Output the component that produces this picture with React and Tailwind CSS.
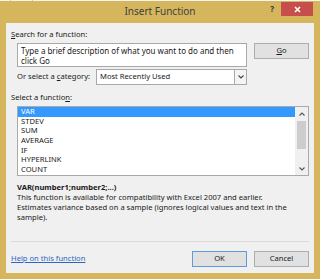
export default function App() {
  const items = ["VAR", "STDEV", "SUM", "AVERAGE", "IF", "HYPERLINK", "COUNT"];
  const font = { fontFamily: '"Noto Sans", "Open Sans", sans-serif' };

  return (
    <div
      className="w-[320px] h-[279px] bg-[#d6b65c] flex flex-col text-[7.6px] text-[#1a1a1a] overflow-hidden"
      style={font}
    >
      {/* excel behind the dialog */}
      <div className="h-[1px] bg-[#f4f4f4] flex">
        <div className="w-[11px] border-r border-[#c8c8c8]" />
        <div className="w-[22px] border-r border-[#c8c8c8]" />
      </div>

      {/* title bar */}
      <div className="h-[22px] grid grid-cols-[1fr_auto_1fr]">
        <div />
        <div className="flex items-center text-[10px] text-[#3f3f3f] pb-[1px]">Insert Function</div>
        <div className="flex justify-end items-start">
          <span className="mt-[3px] mr-[7px] text-[8px] font-bold text-[#333] leading-[10px]">?</span>
          <button className="mt-[1px] mr-[7px] w-[32px] h-[14px] bg-[#c74f4b] flex items-center justify-center">
            <svg width="7" height="7" viewBox="0 0 7 7">
              <path d="M1 1L6 6M6 1L1 6" stroke="white" strokeWidth="1.6" />
            </svg>
          </button>
        </div>
      </div>

      {/* body */}
      <div className="flex-1 mx-[6px] mb-[6px] bg-[#f0f0f0] flex flex-col">
        <div className="mt-[6px] ml-[5px] h-[10px] leading-[10px]">
          <span className="underline">S</span>earch for a function:
        </div>

        <div className="mt-[4px] ml-[11px] flex items-start">
          <div className="w-[230px] h-[24px] bg-white border border-[#a9a9a9] px-[3px] pt-[2px] leading-[9.5px] text-[8px]">
            Type a brief description of what you want to do and then click Go
          </div>
          <button className="ml-[7px] w-[55px] h-[16px] bg-[#e1e1e1] border border-[#adadad] flex items-center justify-center">
            <span className="underline">G</span>o
          </button>
        </div>

        <div className="mt-[2px] ml-[11px] flex items-center">
          <span className="w-[79px]">
            Or select a <span className="underline">c</span>ategory:
          </span>
          <div className="w-[151px] h-[16px] bg-white border border-[#a9a9a9] flex items-center">
            <span className="flex-1 pl-[3px]">Most Recently Used</span>
            <div className="w-[12px] h-full border-l border-[#a9a9a9] bg-[#f4f4f4] flex items-center justify-center">
              <svg width="6" height="4" viewBox="0 0 6 4">
                <path d="M0.5 0.5L3 3L5.5 0.5" stroke="#444" strokeWidth="1.1" fill="none" />
              </svg>
            </div>
          </div>
        </div>

        <div className="mt-[7px] ml-[5px] h-[10px] leading-[10px]">
          Select a functio<span className="underline">n</span>:
        </div>

        <div className="mt-[4px] ml-[11px] w-[292px] h-[70px] bg-white border border-[#a9a9a9] flex">
          <div className="flex-1 flex flex-col">
            {items.map((it, i) => (
              <div
                key={it}
                className={
                  i === 0
                    ? "h-[9.7px] leading-[9.7px] pl-[3px] bg-[#3399ff] text-white"
                    : "h-[9.7px] leading-[9.7px] pl-[3px]"
                }
              >
                {it}
              </div>
            ))}
          </div>
          <div className="w-[13px] bg-[#f0f0f0] flex flex-col items-center">
            <div className="h-[14px] flex items-center justify-center">
              <svg width="6" height="4" viewBox="0 0 6 4">
                <path d="M0.5 3.5L3 1L5.5 3.5" stroke="#555" strokeWidth="1.1" fill="none" />
              </svg>
            </div>
            <div className="w-[9px] h-[28px] bg-[#cdcdcd]" />
            <div className="flex-1" />
            <div className="h-[12px] flex items-center justify-center">
              <svg width="6" height="4" viewBox="0 0 6 4">
                <path d="M0.5 0.5L3 3L5.5 0.5" stroke="#555" strokeWidth="1.1" fill="none" />
              </svg>
            </div>
          </div>
        </div>

        <div className="mt-[6px] ml-[11px] font-bold leading-[10px]">VAR(number1;number2;...)</div>
        <div className="ml-[11px] mr-[4px] leading-[10px]">
          This function is available for compatibility with Excel 2007 and earlier.
          <br />
          Estimates variance based on a sample (ignores logical values and text in the sample).
        </div>

        <div className="flex-1" />
        <div className="mx-[5px] h-px bg-[#dcdcdc]" />

        <div className="mt-[9px] mb-[6px] ml-[5px] flex items-center">
          <a className="flex-1 text-[#2a66c4] underline">Help on this function</a>
          <button className="w-[55px] h-[16px] bg-[#e1e1e1] border border-[#5b9be0]">OK</button>
          <button className="ml-[7px] mr-[5px] w-[55px] h-[16px] bg-[#e1e1e1] border border-[#adadad]">
            Cancel
          </button>
        </div>
      </div>
    </div>
  );
}
